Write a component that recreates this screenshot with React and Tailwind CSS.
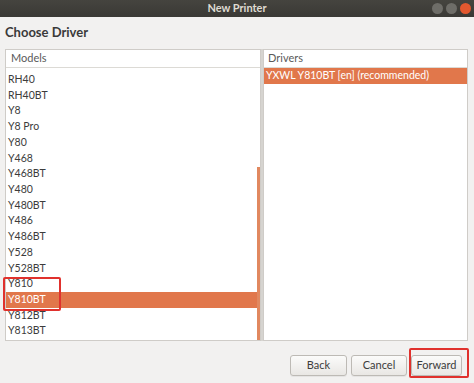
import React from 'react';

const models = [
  'RH40', 'RH40BT', 'Y8', 'Y8 Pro', 'Y80', 'Y468', 'Y468BT', 'Y480', 'Y480BT',
  'Y486', 'Y486BT', 'Y528', 'Y528BT', 'Y810', 'Y810BT', 'Y812BT', 'Y813BT',
];

const Btn = ({ w, children }) => (
  <button
    className={`h-[21px] ${w} rounded-[3px] border border-[#bdbab5] bg-gradient-to-b from-[#fbfbfa] to-[#e9e7e4] text-[11px] text-[#3c3c3c] shadow-[0_1px_0_rgba(0,0,0,0.05)]`}
  >
    {children}
  </button>
);

const App = () => {
  return (
    <div
      className="w-[474px] h-[383px] bg-[#f2f1f0] flex flex-col overflow-hidden text-[#3c3c3c]"
      style={{ fontFamily: 'Lato, "Noto Sans", sans-serif' }}
    >
      {/* title bar */}
      <div className="relative h-[17px] bg-gradient-to-b from-[#45443f] to-[#3a3935] flex items-center justify-center">
        <span className="text-[11px] font-bold text-[#dfdbd2]">New Printer</span>
        <div className="absolute right-[3px] top-[3px] flex gap-[3px]">
          <span className="w-[11px] h-[11px] rounded-full bg-[#6e6d68]" />
          <span className="w-[11px] h-[11px] rounded-full bg-[#6e6d68]" />
          <span className="w-[11px] h-[11px] rounded-full bg-[#e2582f]" />
        </div>
      </div>

      <div className="h-[32px] flex items-center pl-[5px]">
        <h2 className="text-[13px] font-bold text-[#3a3a3a]">Choose Driver</h2>
      </div>

      {/* panes */}
      <div className="flex h-[292px] ml-[5px] mr-[6px]">
        <div className="relative w-[256px] bg-white border border-[#cfccc8] flex flex-col">
          <div className="h-[18px] border-b border-[#dcdad5] flex items-center pl-[5px] text-[11px] text-[#5a5a5a]">
            Models
          </div>
          <div className="pt-[4px] flex-1 overflow-hidden">
            {models.map((m) => (
              <div
                key={m}
                className={`h-[15.73px] flex items-center pl-[2px] text-[10.5px] ${
                  m === 'Y810BT' ? 'bg-[#e1774b] text-white' : ''
                }`}
              >
                {m}
              </div>
            ))}
          </div>
          <div className="absolute right-0 top-[117px] bottom-0 w-[3px] bg-[#e1885f]" />
          <div className="absolute left-[-3px] top-[227px] w-[58px] h-[34px] border-2 border-[#e0312d] rounded-[2px]" />
        </div>
        <div className="w-[2px] bg-[#d6d4d0]" />
        <div className="flex-1 bg-white border border-[#cfccc8] flex flex-col">
          <div className="h-[18px] border-b border-[#dcdad5] flex items-center pl-[4px] text-[11px] text-[#5a5a5a]">
            Drivers
          </div>
          <div className="h-[16px] flex items-center pl-[2px] bg-[#e1774b] text-white text-[10.5px]">
            YXWL Y810BT [en] (recommended)
          </div>
        </div>
      </div>

      {/* buttons */}
      <div className="relative flex justify-end gap-[4px] pr-[12px] pt-[14px]">
        <Btn w="w-[57px]">Back</Btn>
        <Btn w="w-[56px]">Cancel</Btn>
        <Btn w="w-[51px]">Forward</Btn>
        <div className="absolute right-[5px] top-[7px] w-[60px] h-[30px] border-2 border-[#e0312d] rounded-[2px]" />
      </div>
    </div>
  );
};

export default App;
